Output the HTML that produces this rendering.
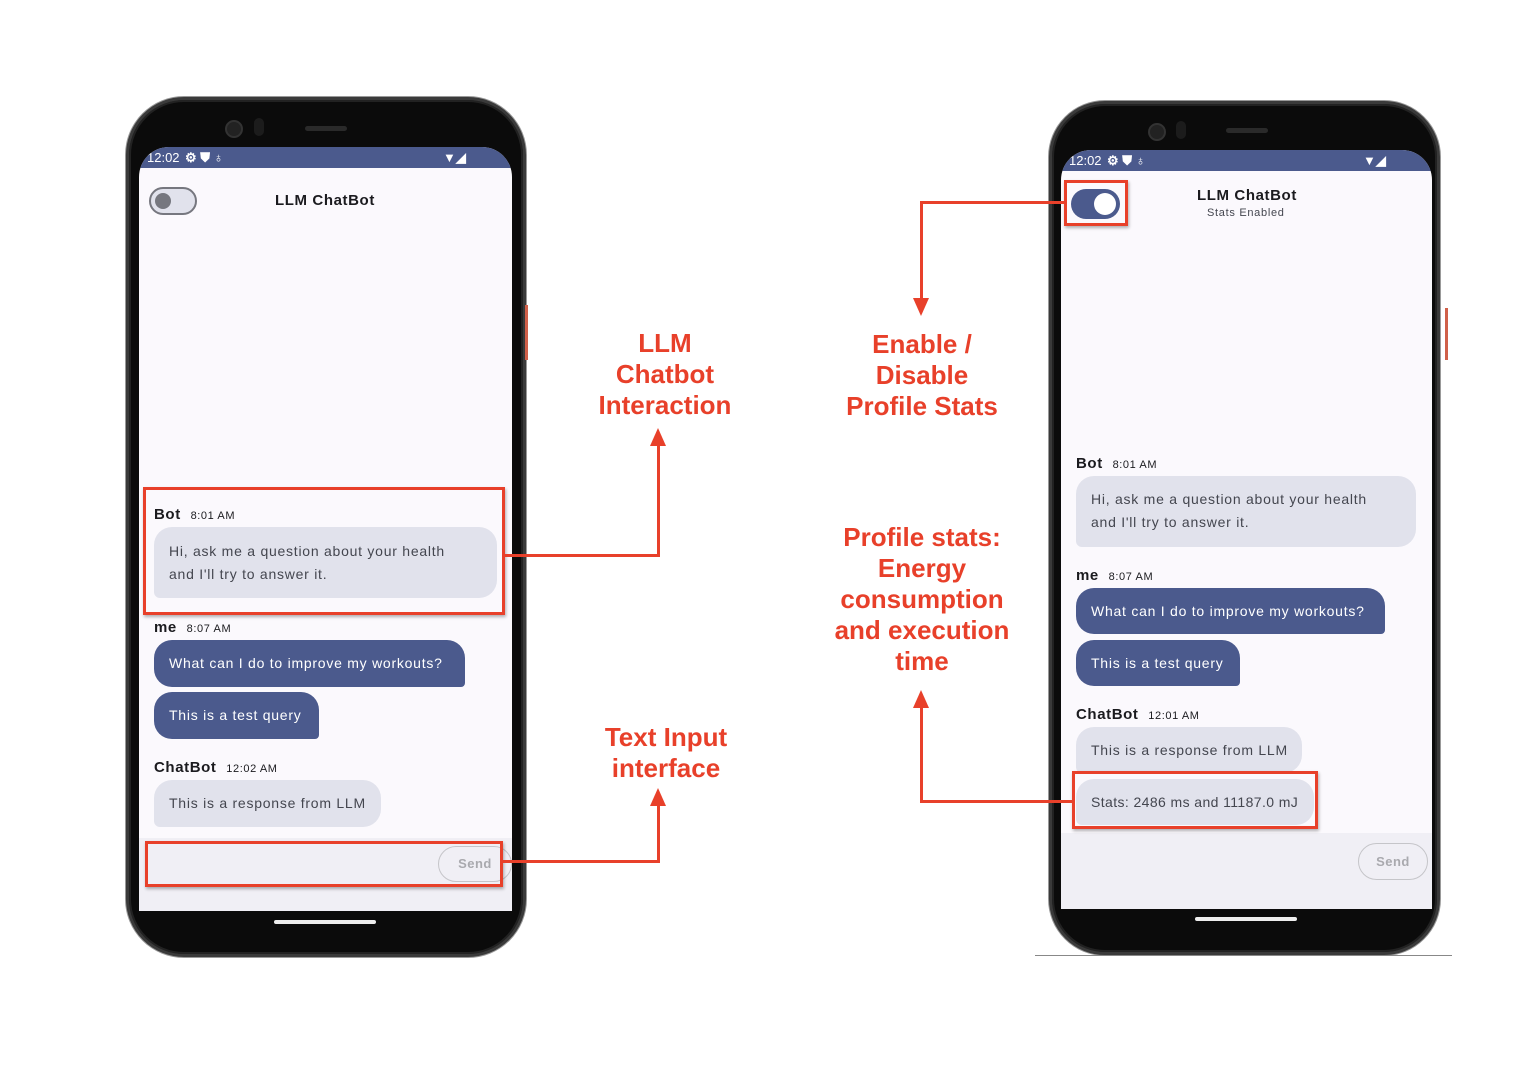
<!DOCTYPE html>
<html><head><meta charset="utf-8"><style>
*{margin:0;padding:0;box-sizing:border-box}
body{width:1514px;height:1070px;background:#fff;position:relative;overflow:hidden;font-family:"Liberation Sans",sans-serif}
.a{position:absolute}
.phone{position:absolute;background:#0b0b0b;border:3px solid #3a3a3a;box-shadow:0 0 0 1px #999,inset 0 0 0 2px #222}
.scr{position:absolute;background:#fbf9fd;overflow:hidden}
.sb{position:absolute;left:0;right:0;top:0;height:21px;background:#4b5a8d;color:#fff;font-size:13px;line-height:21px;font-weight:bold}
.t{position:absolute;white-space:nowrap;color:#1b1b1f}
.bot{position:absolute;background:#e1e2ec;border-radius:18px 18px 18px 6px;color:#44464f;font-size:14px;letter-spacing:.75px;white-space:nowrap}
.usr{position:absolute;background:#4b5a8d;border-radius:18px 18px 4px 18px;color:#fff;font-size:14px;letter-spacing:.75px;line-height:47px;padding-left:15px;white-space:nowrap}
.rb{position:absolute;border:3px solid #e8402a;box-shadow:1px 2px 3px rgba(0,0,0,.3)}
.ln{position:absolute;background:#e8402a}
.lbl{position:absolute;color:#e8402a;font-weight:bold;font-size:26px;line-height:31px;text-align:center;white-space:nowrap}
.send{position:absolute;border:1px solid #c5c5c9;border-radius:20px;color:#a9a9ae;font-weight:bold;font-size:13px;text-align:center;letter-spacing:.5px}
.home{position:absolute;height:4px;background:#eee;border-radius:2px}
.ttl{font-weight:bold;font-size:15px;letter-spacing:.6px}
</style></head><body>

<!-- LEFT PHONE -->
<div class="phone" style="left:126px;top:97px;width:400px;height:860px;border-radius:58px"></div>
<div class="a" style="left:225px;top:120px;width:18px;height:18px;border-radius:50%;background:#222;border:2px solid #333"></div>
<div class="a" style="left:254px;top:118px;width:10px;height:18px;border-radius:5px;background:#1c1c1c"></div>
<div class="a" style="left:305px;top:126px;width:42px;height:5px;border-radius:3px;background:#2a2a2a"></div>
<div class="a" style="left:525px;top:305px;width:3px;height:55px;background:#d0604a"></div>
<div class="scr" style="left:139px;top:147px;width:373px;height:764px;border-radius:30px 30px 0 0">
  <div class="sb"><span style="position:absolute;left:8px;font-weight:normal">12:02</span><span style="position:absolute;left:46px">⚙ ⛊ ♁</span><span style="position:absolute;left:304px;font-size:13px">▼◢</span></div>
  <div class="a" style="left:0;right:0;top:691px;bottom:0;background:#f0eff5"></div>
</div>
<div class="a" style="left:149px;top:187px;width:48px;height:28px;border-radius:14px;border:2px solid #76777f;background:#e1e2ec"></div>
<div class="a" style="left:155px;top:193px;width:16px;height:16px;border-radius:50%;background:#76777f"></div>
<div class="t ttl" style="left:275px;top:192px">LLM ChatBot</div>
<div class="t ttl" style="left:154px;top:506px">Bot <span style="font-size:11px;font-weight:normal;margin-left:5px">8:01 AM</span></div>
<div class="bot" style="left:154px;top:527px;width:343px;height:71px;padding:13px 15px;line-height:23px">Hi, ask me a question about your health<br>and I'll try to answer it.</div>
<div class="t ttl" style="left:154px;top:619px">me <span style="font-size:11px;font-weight:normal;margin-left:5px">8:07 AM</span></div>
<div class="usr" style="left:154px;top:640px;width:311px;height:47px">What can I do to improve my workouts?</div>
<div class="usr" style="left:154px;top:692px;width:165px;height:47px">This is a test query</div>
<div class="t ttl" style="left:154px;top:759px">ChatBot <span style="font-size:11px;font-weight:normal;margin-left:5px">12:02 AM</span></div>
<div class="bot" style="left:154px;top:780px;width:227px;height:47px;line-height:47px;padding-left:15px">This is a response from LLM</div>
<div class="send" style="left:438px;top:846px;width:74px;height:36px;line-height:34px">Send</div>
<div class="home" style="left:274px;top:920px;width:102px"></div>
<div class="rb" style="left:143px;top:487px;width:362px;height:128px"></div>
<div class="rb" style="left:145px;top:841px;width:358px;height:46px"></div>

<!-- RIGHT PHONE -->
<div class="phone" style="left:1049px;top:101px;width:391px;height:854px;border-radius:56px"></div>
<div class="a" style="left:1148px;top:123px;width:18px;height:18px;border-radius:50%;background:#222;border:2px solid #333"></div>
<div class="a" style="left:1176px;top:121px;width:10px;height:18px;border-radius:5px;background:#1c1c1c"></div>
<div class="a" style="left:1226px;top:128px;width:42px;height:5px;border-radius:3px;background:#2a2a2a"></div>
<div class="a" style="left:1445px;top:308px;width:3px;height:52px;background:#d0604a"></div>
<div class="a" style="left:1035px;top:955px;width:417px;height:1px;background:#888"></div>
<div class="scr" style="left:1061px;top:150px;width:371px;height:759px;border-radius:30px 30px 0 0">
  <div class="sb"><span style="position:absolute;left:8px;font-weight:normal">12:02</span><span style="position:absolute;left:46px">⚙ ⛊ ♁</span><span style="position:absolute;left:302px;font-size:13px">▼◢</span></div>
  <div class="a" style="left:0;right:0;top:683px;bottom:0;background:#f0eff5"></div>
</div>
<div class="a" style="left:1071px;top:189px;width:49px;height:30px;border-radius:15px;background:#4b5a8d"></div>
<div class="a" style="left:1094px;top:193px;width:22px;height:22px;border-radius:50%;background:#fff"></div>
<div class="t ttl" style="left:1197px;top:187px">LLM ChatBot</div>
<div class="t" style="left:1207px;top:207px;font-size:11px;color:#44464f;letter-spacing:.7px">Stats Enabled</div>
<div class="t ttl" style="left:1076px;top:455px">Bot <span style="font-size:11px;font-weight:normal;margin-left:5px">8:01 AM</span></div>
<div class="bot" style="left:1076px;top:476px;width:340px;height:71px;padding:12px 15px;line-height:23px">Hi, ask me a question about your health<br>and I'll try to answer it.</div>
<div class="t ttl" style="left:1076px;top:567px">me <span style="font-size:11px;font-weight:normal;margin-left:5px">8:07 AM</span></div>
<div class="usr" style="left:1076px;top:588px;width:309px;height:46px;line-height:46px">What can I do to improve my workouts?</div>
<div class="usr" style="left:1076px;top:640px;width:164px;height:46px;line-height:46px">This is a test query</div>
<div class="t ttl" style="left:1076px;top:706px">ChatBot <span style="font-size:11px;font-weight:normal;margin-left:5px">12:01 AM</span></div>
<div class="bot" style="left:1076px;top:727px;width:226px;height:46px;line-height:46px;padding-left:15px">This is a response from LLM</div>
<div class="bot" style="left:1076px;top:779px;width:238px;height:46px;line-height:46px;padding-left:15px;letter-spacing:.4px">Stats: 2486 ms and 11187.0 mJ</div>
<div class="send" style="left:1358px;top:843px;width:70px;height:37px;line-height:35px">Send</div>
<div class="home" style="left:1195px;top:917px;width:102px"></div>
<div class="rb" style="left:1064px;top:180px;width:64px;height:46px"></div>
<div class="rb" style="left:1072px;top:771px;width:246px;height:58px"></div>

<!-- connectors -->
<div class="ln" style="left:505px;top:554px;width:155px;height:3px"></div>
<div class="ln" style="left:657px;top:440px;width:3px;height:117px"></div>
<div class="a" style="left:650px;top:428px;border-left:8px solid transparent;border-right:8px solid transparent;border-bottom:18px solid #e8402a"></div>
<div class="ln" style="left:503px;top:860px;width:157px;height:3px"></div>
<div class="ln" style="left:657px;top:800px;width:3px;height:63px"></div>
<div class="a" style="left:650px;top:788px;border-left:8px solid transparent;border-right:8px solid transparent;border-bottom:18px solid #e8402a"></div>
<div class="ln" style="left:920px;top:201px;width:144px;height:3px"></div>
<div class="ln" style="left:920px;top:201px;width:3px;height:100px"></div>
<div class="a" style="left:913px;top:298px;border-left:8px solid transparent;border-right:8px solid transparent;border-top:18px solid #e8402a"></div>
<div class="ln" style="left:920px;top:800px;width:152px;height:3px"></div>
<div class="ln" style="left:920px;top:705px;width:3px;height:98px"></div>
<div class="a" style="left:913px;top:690px;border-left:8px solid transparent;border-right:8px solid transparent;border-bottom:18px solid #e8402a"></div>

<div class="lbl" style="left:565px;top:328px;width:200px">LLM<br>Chatbot<br>Interaction</div>
<div class="lbl" style="left:822px;top:329px;width:200px">Enable /<br>Disable<br>Profile Stats</div>
<div class="lbl" style="left:812px;top:522px;width:220px">Profile stats:<br>Energy<br>consumption<br>and execution<br>time</div>
<div class="lbl" style="left:566px;top:722px;width:200px">Text Input<br>interface</div>
</body></html>
